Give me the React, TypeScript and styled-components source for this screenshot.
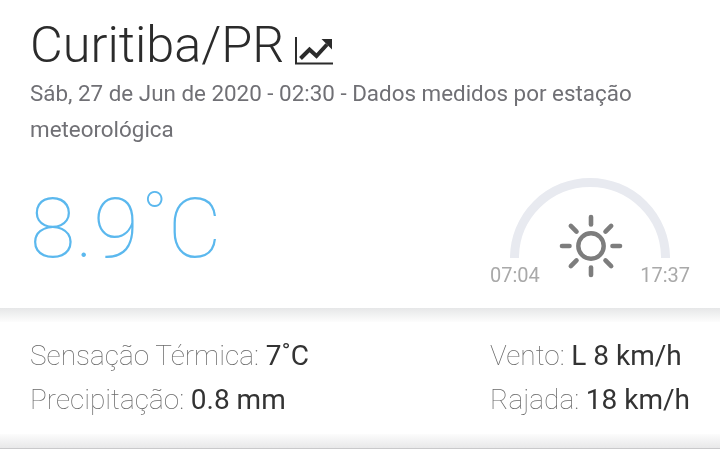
import React from "react";
import styled, { createGlobalStyle } from "styled-components";

const Global = createGlobalStyle`
  html, body { margin: 0; padding: 0; background: #fff; }
  body { font-family: Roboto, "Liberation Sans", sans-serif; }
`;

const Page = styled.div`
  width: 720px;
  height: 449px;
  overflow: hidden;
  display: flex;
  flex-direction: column;
`;

const TopCard = styled.section`
  height: 308px;
  flex: none;
  box-sizing: border-box;
  padding: 16px 30px 0 30px;
  will-change: transform;
`;

const TitleRow = styled.div`
  display: flex;
  align-items: flex-start;
  gap: 11px;
  height: 59px;
`;

const Title = styled.h1`
  margin: 0;
  font-size: 50.4px;
  line-height: 58px;
  font-weight: 300;
  color: #2b2b2b;
`;

const TitleIcon = styled.svg`
  width: 40px;
  height: 40px;
  margin-top: 21px;
  flex: none;
`;

const Subtitle = styled.p`
  margin: 0;
  width: 640px;
  font-size: 22.4px;
  line-height: 36px;
  font-weight: 400;
  color: #707075;
`;

const CurrentRow = styled.div`
  display: flex;
  justify-content: space-between;
  align-items: flex-start;
  margin-top: 31px;
`;

const Temperature = styled.div`
  font-size: 83px;
  line-height: 100px;
  font-weight: 100;
  color: #5bb8ee;
  margin-top: 1px;
`;

const Degree = styled.span`
  font-size: 68px;
  line-height: 0;
  vertical-align: 16px;
  margin-left: 3px;
`;

const SunWidget = styled.div`
  position: relative;
  width: 200px;
  display: flex;
  flex-direction: column;
`;

const Arc = styled.svg`
  display: block;
  width: 160px;
  height: 80px;
  margin: 0 auto;
`;

const SunIcon = styled.svg`
  position: absolute;
  left: 69px;
  top: 36px;
  width: 64px;
  height: 64px;
`;

const Times = styled.div`
  display: flex;
  justify-content: space-between;
  font-size: 20px;
  line-height: 24px;
  font-weight: 400;
  color: #a9a9a9;
  margin-top: 5px;
`;

const Band = styled.div`
  height: 14px;
  flex: none;
  background: linear-gradient(#e6e7e8, #fdfdfd);
`;

const Details = styled.section`
  flex: none;
  height: 112px;
  box-sizing: border-box;
  padding: 12px 30px 0 30px;
  display: flex;
  justify-content: space-between;
  will-change: transform;
`;

const DetailColumn = styled.div`
  display: flex;
  flex-direction: column;
`;

const Detail = styled.div`
  font-size: 28px;
  line-height: 44px;
  font-weight: 100;
  color: #6a6a6a;
  white-space: nowrap;
`;

const Value = styled.b`
  font-weight: 400;
  color: #333;
`;

const BottomBand = styled.div`
  flex: 1;
  background: linear-gradient(#fcfcfc, #e8e8e9);
  border-bottom: 1px solid #c9c9cb;
`;

const rays = [0, 45, 90, 135, 180, 225, 270, 315];

export default function App() {
  return (
    <Page>
      <Global />
      <TopCard>
        <TitleRow>
          <Title>Curitiba/PR</Title>
          <TitleIcon viewBox="0 0 40 40" fill="none">
            <path d="M1 0V26.5H38" stroke="#2b2b2b" strokeWidth="2" />
            <path d="M5.5 21.5L14.5 12.5L21.5 19L32 7.5" stroke="#2b2b2b" strokeWidth="4" />
            <path d="M26.5 2H37V12.5Z" fill="#2b2b2b" />
          </TitleIcon>
        </TitleRow>
        <Subtitle>Sáb, 27 de Jun de 2020 - 02:30 - Dados medidos por estação meteorológica</Subtitle>
        <CurrentRow>
          <Temperature>8.9<Degree>°</Degree>C</Temperature>
          <SunWidget>
            <Arc viewBox="0 0 160 80" fill="none">
              <path d="M4.5 80A75.5 75.5 0 0 1 155.5 80" stroke="#e8eaf0" strokeWidth="9" />
            </Arc>
            <SunIcon viewBox="-32 -32 64 64" fill="none" stroke="#7d7d7d">
              <circle r="12.7" strokeWidth="4.4" />
              {rays.map((a) => (
                <line key={a} x1="0" y1={a % 90 ? -20.5 : -21.5} x2="0" y2={a % 90 ? -28.5 : -29} strokeWidth="4.6" strokeLinecap="round" transform={`rotate(${a})`} />
              ))}
            </SunIcon>
            <Times>
              <span>07:04</span>
              <span>17:37</span>
            </Times>
          </SunWidget>
        </CurrentRow>
      </TopCard>
      <Band />
      <Details>
        <DetailColumn>
          <Detail>Sensação Térmica: <Value>7˚C</Value></Detail>
          <Detail>Precipitação: <Value>0.8 mm</Value></Detail>
        </DetailColumn>
        <DetailColumn>
          <Detail>Vento: <Value>L 8 km/h</Value></Detail>
          <Detail>Rajada: <Value>18 km/h</Value></Detail>
        </DetailColumn>
      </Details>
      <BottomBand />
    </Page>
  );
}
